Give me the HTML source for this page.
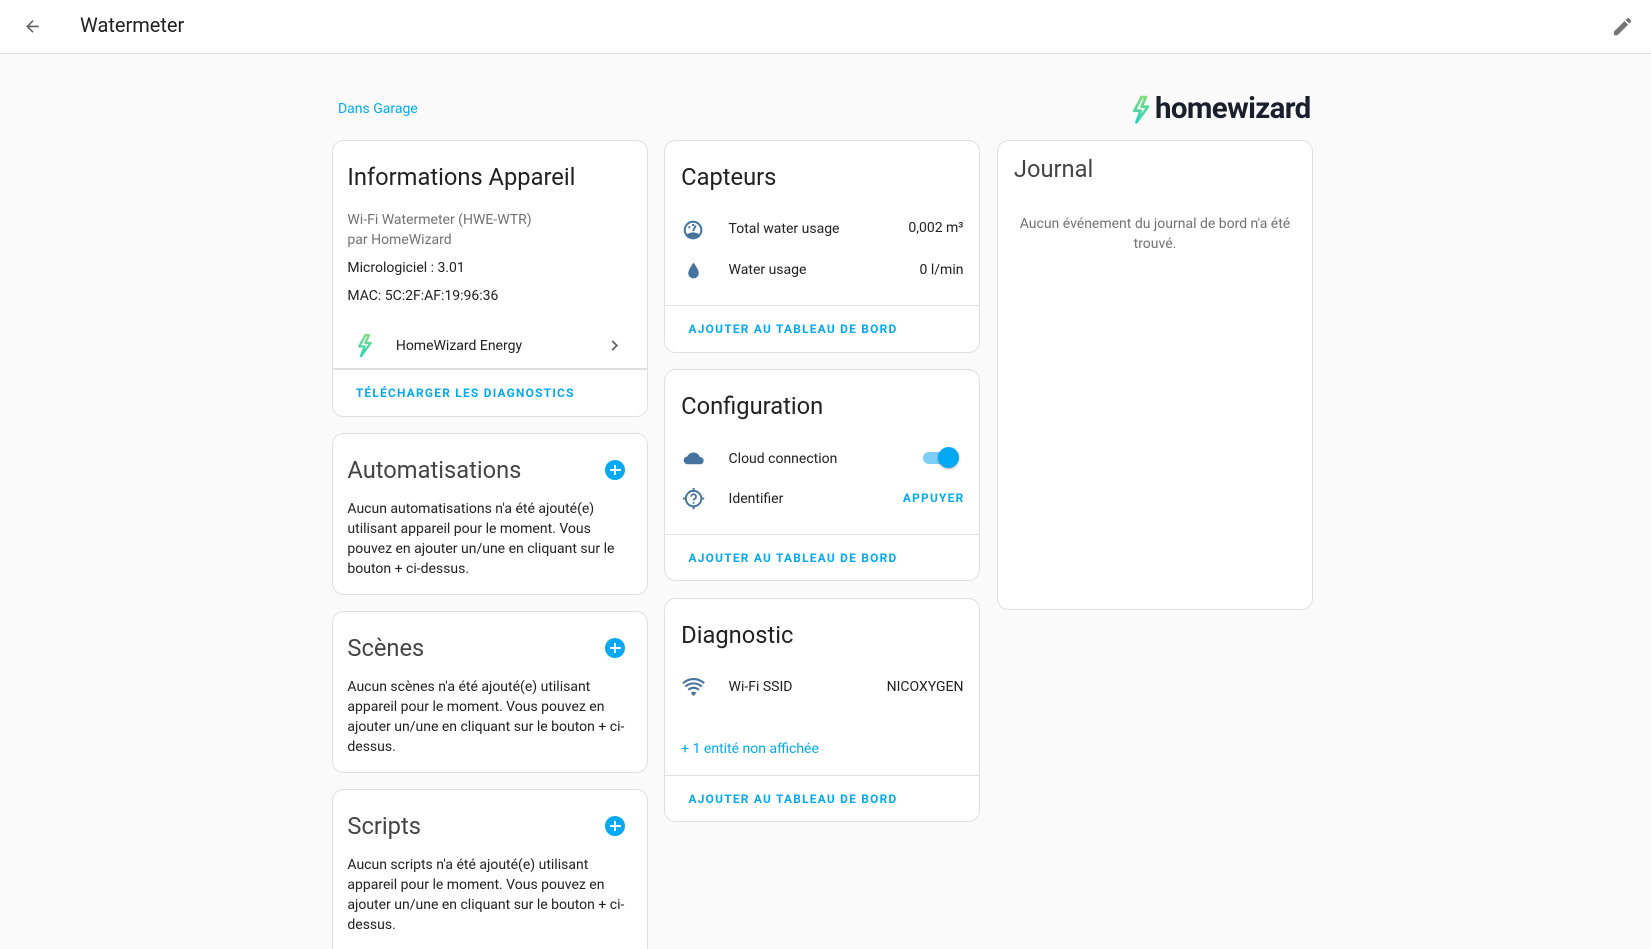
<!DOCTYPE html>
<html><head><meta charset="utf-8"><style>
html,body{margin:0;padding:0;background:#fafafa;overflow:hidden;width:1651px;height:949px}
#w{zoom:1.0529;position:relative;width:1568px;height:901px;font-family:"Roboto","Liberation Sans",sans-serif;color:#212121}
.a{position:absolute;white-space:nowrap}
.hdr{position:absolute;left:0;top:0;width:1568px;height:50px;background:#fff;border-bottom:1px solid #e0e0e0}
.card{position:absolute;background:#fff;border:1px solid #e0e0e0;border-radius:11px;box-sizing:border-box;width:300px}
.t{font-size:22.5px;color:#212121}
.tg{font-size:22.5px;color:#444}
.b{font-size:13.3px}
.btn{font-size:11.3px;font-weight:bold;letter-spacing:1.2px;color:#03a9f4}
.div{position:absolute;left:0;width:100%;height:1px;background:#e0e0e0}
.p{font-size:13.3px;line-height:19px;white-space:normal;width:270px}
.plus{position:absolute;width:19px;height:19px;border-radius:50%;background:#03a9f4;color:#fff}
.plus:before{content:"";position:absolute;left:4.5px;top:8.5px;width:10px;height:2px;background:#fff}
.plus:after{content:"";position:absolute;left:8.5px;top:4.5px;width:2px;height:10px;background:#fff}
</style></head><body><div id="w">
<div class="hdr">
<svg class="a" style="left:22px;top:16px" width="18" height="18" viewBox="0 0 24 24"><path d="M20 11H7.83l5.59-5.59L12 4l-8 8 8 8 1.41-1.41L7.83 13H20z" fill="#616161"/></svg>
<div class="a" style="left:76px;top:12px;font-size:19px">Watermeter</div>
<svg class="a" style="left:1530px;top:14px" width="22" height="22" viewBox="0 0 24 24"><path d="M3 17.25V21h3.75L17.81 9.94l-3.75-3.75L3 17.25zM20.71 7.04a1 1 0 000-1.41l-2.34-2.34a1 1 0 00-1.41 0l-1.83 1.83 3.75 3.75 1.83-1.83z" fill="#757575"/></svg>
</div>
<div class="a" style="left:321px;top:96px;font-size:13.3px;color:#03a9f4">Dans Garage</div>
<svg class="a" style="left:1071px;top:90px" width="24" height="28" viewBox="0 0 24 28"><defs><linearGradient id="g" x1="0" y1="0" x2="0" y2="1"><stop offset="0" stop-color="#7be07b"/><stop offset="1" stop-color="#2ed1c0"/></linearGradient></defs><path d="M13 2 L6 15 H12 L8 26 L19 11 H13 L17 2 Z" fill="none" stroke="url(#g)" stroke-width="2.6" stroke-linejoin="round"/></svg>
<div class="a" style="left:1097px;top:87px;font-size:28px;font-weight:bold;color:#1a1f2e;letter-spacing:-0.6px">homewizard</div>

<div class="card" style="left:315px;top:133px;height:263px">
<div class="a t" style="left:14px;top:21px">Informations Appareil</div>
<div class="a b" style="left:14px;top:67px;color:#727272">Wi-Fi Watermeter (HWE-WTR)</div>
<div class="a b" style="left:14px;top:86px;color:#727272">par HomeWizard</div>
<div class="a b" style="left:14px;top:113px">Micrologiciel : 3.01</div>
<div class="a b" style="left:14px;top:140px">MAC: 5C:2F:AF:19:96:36</div>
<svg class="a" style="left:20px;top:182px" width="20" height="24" viewBox="0 0 24 28"><path d="M13 2 L6 15 H12 L8 26 L19 11 H13 L17 2 Z" fill="none" stroke="url(#g)" stroke-width="2.6" stroke-linejoin="round"/></svg>
<div class="a b" style="left:60px;top:187px">HomeWizard Energy</div>
<svg class="a" style="left:258px;top:184px" width="20" height="20" viewBox="0 0 24 24"><path d="M8.6 16.6 13.2 12 8.6 7.4 10 6l6 6-6 6z" fill="#616161"/></svg>
<div class="div" style="top:216px"></div>
<div class="a btn" style="left:22px;top:233px">TÉLÉCHARGER LES DIAGNOSTICS</div>
</div>

<div class="card" style="left:315px;top:411px;height:154px">
<div class="a tg" style="left:14px;top:21px">Automatisations</div>
<div class="plus" style="left:259px;top:25px"></div>
<div class="a p" style="left:14px;top:62px">Aucun automatisations n'a été ajouté(e) utilisant appareil pour le moment. Vous pouvez en ajouter un/une en cliquant sur le bouton + ci-dessus.</div>
</div>
<div class="card" style="left:315px;top:580px;height:154px">
<div class="a tg" style="left:14px;top:21px">Scènes</div>
<div class="plus" style="left:259px;top:25px"></div>
<div class="a p" style="left:14px;top:62px">Aucun scènes n'a été ajouté(e) utilisant appareil pour le moment. Vous pouvez en ajouter un/une en cliquant sur le bouton + ci-dessus.</div>
</div>
<div class="card" style="left:315px;top:749px;height:170px">
<div class="a tg" style="left:14px;top:21px">Scripts</div>
<div class="plus" style="left:259px;top:25px"></div>
<div class="a p" style="left:14px;top:62px">Aucun scripts n'a été ajouté(e) utilisant appareil pour le moment. Vous pouvez en ajouter un/une en cliquant sur le bouton + ci-dessus.</div>
</div>

<div class="card" style="left:631px;top:133px;height:202px">
<div class="a t" style="left:15px;top:21px">Capteurs</div>
<svg class="a" style="left:16px;top:74px" width="21" height="21" viewBox="0 0 24 24"><circle cx="12" cy="12" r="9" fill="none" stroke="#44739e" stroke-width="2.2"/><path d="M5 17 Q12 12 19 17 L17 20 H7Z" fill="#44739e"/><path d="M12 13 L15 7" stroke="#44739e" stroke-width="2"/><circle cx="8" cy="9" r="1.2" fill="#44739e"/><circle cx="12" cy="6.5" r="1.2" fill="#44739e"/></svg>
<div class="a b" style="left:60px;top:76px">Total water usage</div>
<div class="a b" style="right:15px;top:75px">0,002 m³</div>
<svg class="a" style="left:17px;top:112px" width="20" height="22" viewBox="0 0 24 24"><path d="M12 3 C12 3 6 11 6 15 a6 6 0 0 0 12 0 C18 11 12 3 12 3Z" fill="#44739e"/></svg>
<div class="a b" style="left:60px;top:115px">Water usage</div>
<div class="a b" style="right:15px;top:115px">0 l/min</div>
<div class="div" style="top:156px"></div>
<div class="a btn" style="left:22px;top:172px">AJOUTER AU TABLEAU DE BORD</div>
</div>

<div class="card" style="left:631px;top:350px;height:202px">
<div class="a t" style="left:15px;top:21px">Configuration</div>
<svg class="a" style="left:16px;top:75px" width="22" height="18" viewBox="0 0 24 18"><path d="M6 16 a4 4 0 0 1 -0.5 -8 a7 7 0 0 1 13 0.5 a3.8 3.8 0 0 1 1 7.5Z" fill="#44739e"/></svg>
<div class="a b" style="left:60px;top:77px">Cloud connection</div>
<div class="a" style="left:245px;top:78px;width:28px;height:12px;border-radius:6px;background:#7dcef7"></div>
<div class="a" style="left:259px;top:74px;width:20px;height:20px;border-radius:50%;background:#03a9f4;box-shadow:0 1px 2px rgba(0,0,0,.3)"></div>
<svg class="a" style="left:16px;top:112px" width="22" height="22" viewBox="0 0 24 24"><circle cx="12" cy="12" r="8" fill="none" stroke="#44739e" stroke-width="2"/><path d="M12 1v3M12 20v3M1 12h3M20 12h3" stroke="#44739e" stroke-width="2"/><path d="M9.5 10a2.5 2.5 0 1 1 3.5 2.3c-.7.4-1 .8-1 1.7" fill="none" stroke="#44739e" stroke-width="1.8"/><circle cx="12" cy="16.5" r="1" fill="#44739e"/></svg>
<div class="a b" style="left:60px;top:115px">Identifier</div>
<div class="a btn" style="right:14px;top:115px">APPUYER</div>
<div class="div" style="top:156px"></div>
<div class="a btn" style="left:22px;top:172px">AJOUTER AU TABLEAU DE BORD</div>
</div>

<div class="card" style="left:631px;top:568px;height:213px">
<div class="a t" style="left:15px;top:21px">Diagnostic</div>
<svg class="a" style="left:16px;top:74px" width="22" height="20" viewBox="0 0 24 22"><path d="M12 20 L15 16.5 a5 5 0 0 0 -6 0Z" fill="#44739e"/><path d="M6.5 13.5 a8 8 0 0 1 11 0 M3.5 10 a12.5 12.5 0 0 1 17 0 M1 6.5 a16 16 0 0 1 22 0" fill="none" stroke="#44739e" stroke-width="2.2"/></svg>
<div class="a b" style="left:60px;top:76px">Wi-Fi SSID</div>
<div class="a b" style="right:15px;top:76px">NICOXYGEN</div>
<div class="a b" style="left:15px;top:135px;color:#03a9f4">+ 1 entité non affichée</div>
<div class="div" style="top:167px"></div>
<div class="a btn" style="left:22px;top:183px">AJOUTER AU TABLEAU DE BORD</div>
</div>

<div class="card" style="left:947px;top:133px;height:446px">
<div class="a tg" style="left:15px;top:13px">Journal</div>
<div class="a" style="left:0;width:298px;top:69px;text-align:center;font-size:13.3px;line-height:19px;color:#727272;white-space:normal">Aucun événement du journal de bord n'a été<br>trouvé.</div>
</div>
</div></body></html>
